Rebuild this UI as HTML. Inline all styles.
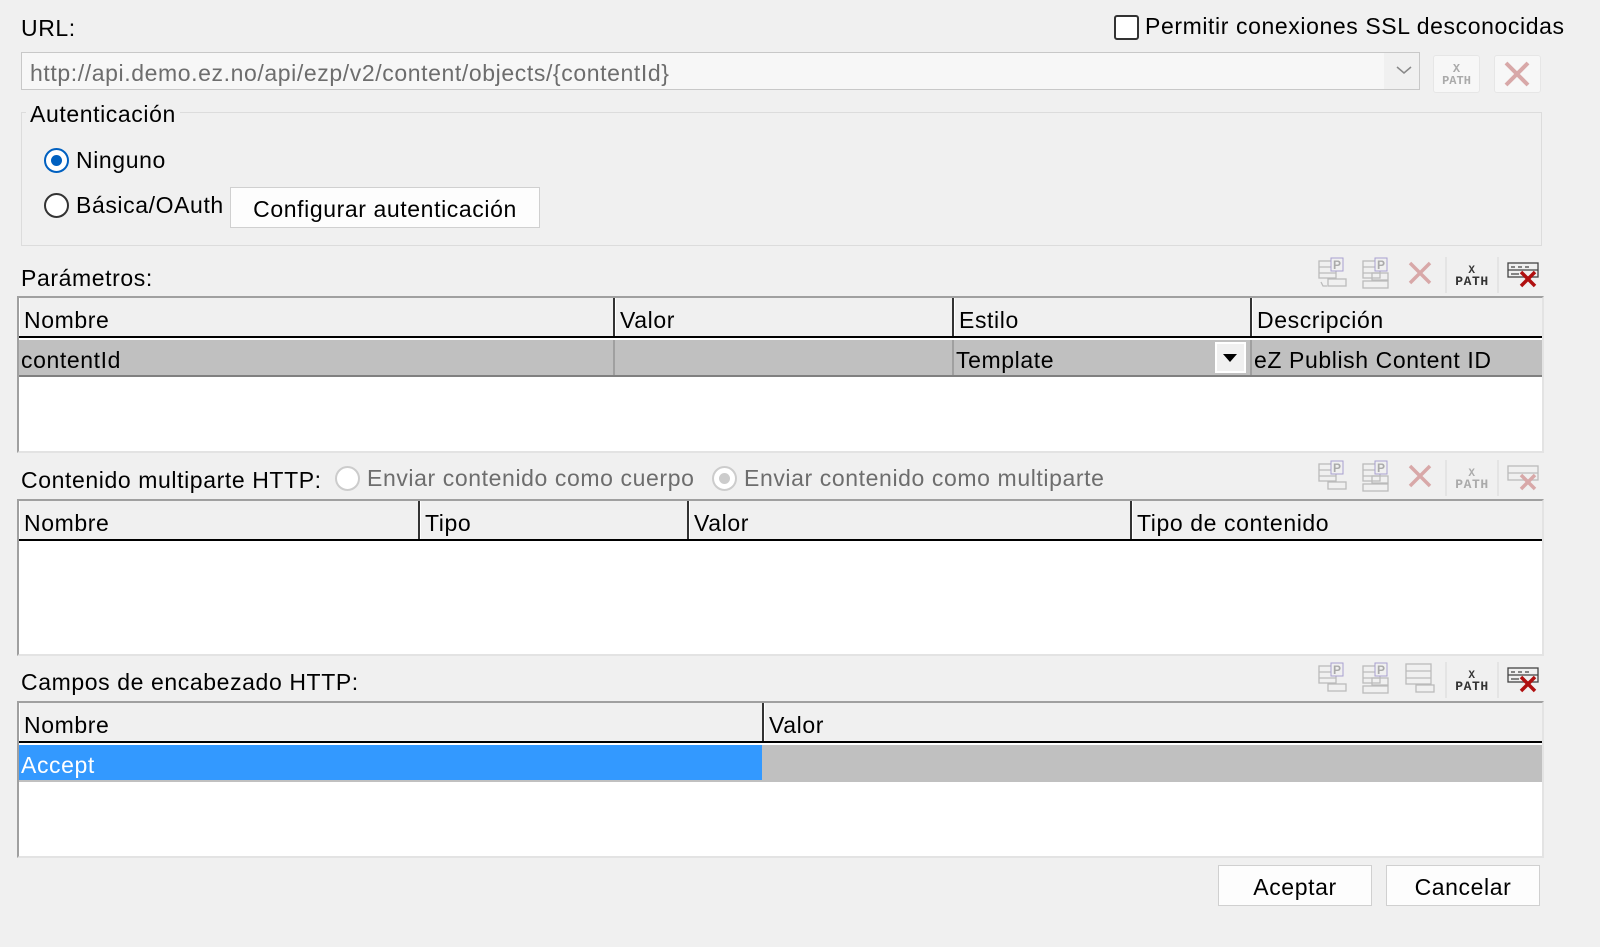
<!DOCTYPE html><html><head><meta charset="utf-8"><style>
*{box-sizing:border-box;margin:0;padding:0}
body{width:1600px;height:947px;background:#f0f0f0;font-family:"Liberation Sans",sans-serif;font-size:23px;letter-spacing:0.6px;color:#000;position:relative;overflow:hidden}
.a{position:absolute;white-space:nowrap}
.t{position:absolute;background:#fff;border:2px solid #a0a0a0;border-right-color:#e3e3e3;border-bottom-color:#e3e3e3}
.hd{position:absolute;left:0;right:0;top:0;height:40px;background:#f0f0f0;border-bottom:2px solid #000}
.hc{position:absolute;top:0;height:38px;border-right:2px solid #333;padding:9px 4px;border-left:1px solid #fff}
.row{position:absolute;left:0;right:0;height:37px;background:#c0c0c0;border-bottom:2px solid #808080}
.rc{position:absolute;top:0;height:35px;padding:7px 2px;border-right:2px solid #a0a0a0}
.btn{position:absolute;background:#fdfdfd;border:1px solid #d0d0d0;text-align:center;padding-top:8px}
.rad{position:absolute;width:25px;height:25px;border-radius:50%;border:2px solid #333;background:#fff}
</style></head><body>
<div class="a" style="left:21px;top:15px">URL:</div>
<div class="a" style="left:1114px;top:15px;width:25px;height:25px;border:2px solid #333;border-radius:3px;background:#fff"></div>
<div class="a" style="left:1145px;top:13px">Permitir conexiones SSL desconocidas</div>
<div class="a" style="left:21px;top:52px;width:1399px;height:38px;border:1px solid #c8c8c8;background:#f0f0f0"></div>
<div class="a" style="left:22px;top:53px;width:1362px;height:36px;background:#f7f7f7"></div>
<div class="a" style="left:30px;top:60px;color:#6d6d6d">http://api.demo.ez.no/api/ezp/v2/content/objects/{contentId}</div>
<svg class="a" style="left:1396px;top:65px" width="16" height="10"><path d="M1 2l7 6 7-6" fill="none" stroke="#888" stroke-width="1.5"/></svg>
<div class="a" style="left:1433px;top:55px;width:47px;height:38px;border:1px solid #e6e6e6;background:#f7f7f7;border-radius:3px;font:bold 12px 'Liberation Mono',monospace;letter-spacing:0;color:#aaa;text-align:center;line-height:12px;padding-top:7px">X<br>PATH</div>
<div class="a" style="left:1494px;top:55px;width:47px;height:38px;border:1px solid #e6e6e6;background:#f7f7f7;border-radius:3px"></div>
<svg class="a" style="left:1503px;top:60px" width="28" height="28"><path d="M3 3l22 22M25 3L3 25" stroke="#d8a8a8" stroke-width="4"/></svg>

<div class="a" style="left:21px;top:112px;width:1521px;height:134px;border:1px solid #dcdcdc"></div>
<div class="a" style="left:26px;top:101px;background:#f0f0f0;padding:0 4px">Autenticación</div>
<div class="rad" style="left:44px;top:148px;border-color:#0060c0"></div><div class="a" style="left:51px;top:155px;width:11px;height:11px;border-radius:50%;background:#0060c0"></div>
<div class="a" style="left:76px;top:147px">Ninguno</div>
<div class="rad" style="left:44px;top:193px"></div>
<div class="a" style="left:76px;top:192px">Básica/OAuth</div>
<div class="btn" style="left:230px;top:187px;width:310px;height:41px">Configurar autenticación</div>

<div class="a" style="left:21px;top:265px">Parámetros:</div>
<svg class="a" style="left:1316px;top:255px" width="228" height="40">
<g fill="none" stroke="#bbb" stroke-width="1.3"><rect x="3" y="6" width="17" height="17"/><path d="M3 12h17M3 18h17"/><rect x="12" y="24" width="18" height="7"/><path d="M5 27l2 4h4"/></g>
<rect x="15" y="3" width="12" height="13" fill="#f0f0f0" stroke="#a8a0d0"/><text x="17" y="14" font-size="12" font-weight="bold" fill="#aaa" font-family="Liberation Sans">P</text>
<g fill="none" stroke="#bbb" stroke-width="1.3"><rect x="47" y="6" width="17" height="17"/><path d="M47 12h17M47 18h17"/><rect x="56" y="18" width="16" height="7"/><rect x="47" y="26" width="25" height="7"/></g>
<rect x="59" y="3" width="12" height="13" fill="#f0f0f0" stroke="#a8a0d0"/><text x="61" y="14" font-size="12" font-weight="bold" fill="#aaa" font-family="Liberation Sans">P</text>
<path d="M94 8l20 20M114 8L94 28" stroke="#d8a8a8" stroke-width="3.5"/>
<line x1="130" y1="2" x2="130" y2="38" stroke="#d8d8d8"/>
<text x="156" y="18" font-size="11" font-weight="bold" fill="#333" font-family="Liberation Mono" text-anchor="middle">X</text><text x="156" y="30" font-size="13" font-weight="bold" fill="#333" font-family="Liberation Mono" text-anchor="middle">PATH</text>
<line x1="182" y1="2" x2="182" y2="38" stroke="#d8d8d8"/>
<g fill="none" stroke="#444" stroke-width="1.3"><rect x="192" y="8" width="30" height="14"/><path d="M192 15h30M195 12h4M202 12h4M209 12h4M195 19h8"/></g><path d="M205 17l14 14M219 17l-14 14" stroke="#b01010" stroke-width="3.5"/>
</svg>
<div class="t" style="left:17px;top:296px;width:1527px;height:157px">
<div class="hd"><div class="hc" style="left:0;width:596px">Nombre</div><div class="hc" style="left:596px;width:339px">Valor</div><div class="hc" style="left:935px;width:298px">Estilo</div><div class="hc" style="left:1233px;width:291px;border-right:none">Descripción</div></div>
<div class="row" style="top:42px"><div class="rc" style="left:0;width:596px">contentId</div><div class="rc" style="left:596px;width:339px"></div><div class="rc" style="left:935px;width:298px">Template<div class="a" style="left:261px;top:2px;width:31px;height:31px;background:#f0f0f0;border:2px solid #fff"><svg width="27" height="27"><path d="M6 10h14l-7 8z"/></svg></div></div><div class="rc" style="left:1233px;width:291px;border:none">eZ Publish Content ID</div></div>
</div>

<div class="a" style="left:21px;top:467px">Contenido multiparte HTTP:</div>
<div class="rad" style="left:335px;top:466px;border-color:#ccc"></div>
<div class="a" style="left:367px;top:465px;color:#6d6d6d">Enviar contenido como cuerpo</div>
<div class="rad" style="left:712px;top:466px;border-color:#ccc"></div><div class="a" style="left:719px;top:473px;width:11px;height:11px;border-radius:50%;background:#ccc"></div>
<div class="a" style="left:744px;top:465px;color:#6d6d6d">Enviar contenido como multiparte</div>
<svg class="a" style="left:1316px;top:458px" width="228" height="40">
<g fill="none" stroke="#bbb" stroke-width="1.3"><rect x="3" y="6" width="17" height="17"/><path d="M3 12h17M3 18h17"/><rect x="12" y="24" width="18" height="7"/></g>
<rect x="15" y="3" width="12" height="13" fill="#f0f0f0" stroke="#a8a0d0"/><text x="17" y="14" font-size="12" font-weight="bold" fill="#aaa" font-family="Liberation Sans">P</text>
<g fill="none" stroke="#bbb" stroke-width="1.3"><rect x="47" y="6" width="17" height="17"/><path d="M47 12h17M47 18h17"/><rect x="56" y="18" width="16" height="7"/><rect x="47" y="26" width="25" height="7"/></g>
<rect x="59" y="3" width="12" height="13" fill="#f0f0f0" stroke="#a8a0d0"/><text x="61" y="14" font-size="12" font-weight="bold" fill="#aaa" font-family="Liberation Sans">P</text>
<path d="M94 8l20 20M114 8L94 28" stroke="#d8a8a8" stroke-width="3.5"/>
<line x1="130" y1="2" x2="130" y2="38" stroke="#d8d8d8"/>
<text x="156" y="18" font-size="11" font-weight="bold" fill="#aaa" font-family="Liberation Mono" text-anchor="middle">X</text><text x="156" y="30" font-size="13" font-weight="bold" fill="#aaa" font-family="Liberation Mono" text-anchor="middle">PATH</text>
<line x1="182" y1="2" x2="182" y2="38" stroke="#d8d8d8"/>
<g fill="none" stroke="#bbb" stroke-width="1.3"><rect x="192" y="8" width="30" height="14"/><path d="M192 15h30"/></g><path d="M205 17l14 14M219 17l-14 14" stroke="#d8a8a8" stroke-width="3.5"/>
</svg>
<div class="t" style="left:17px;top:499px;width:1527px;height:157px">
<div class="hd"><div class="hc" style="left:0;width:401px">Nombre</div><div class="hc" style="left:401px;width:269px">Tipo</div><div class="hc" style="left:670px;width:443px">Valor</div><div class="hc" style="left:1113px;width:411px;border-right:none">Tipo de contenido</div></div>
</div>

<div class="a" style="left:21px;top:669px">Campos de encabezado HTTP:</div>
<svg class="a" style="left:1316px;top:660px" width="228" height="40">
<g fill="none" stroke="#bbb" stroke-width="1.3"><rect x="3" y="6" width="17" height="17"/><path d="M3 12h17M3 18h17"/><rect x="12" y="24" width="18" height="7"/></g>
<rect x="15" y="3" width="12" height="13" fill="#f0f0f0" stroke="#a8a0d0"/><text x="17" y="14" font-size="12" font-weight="bold" fill="#aaa" font-family="Liberation Sans">P</text>
<g fill="none" stroke="#bbb" stroke-width="1.3"><rect x="47" y="6" width="17" height="17"/><path d="M47 12h17M47 18h17"/><rect x="56" y="18" width="16" height="7"/><rect x="47" y="26" width="25" height="7"/></g>
<rect x="59" y="3" width="12" height="13" fill="#f0f0f0" stroke="#a8a0d0"/><text x="61" y="14" font-size="12" font-weight="bold" fill="#aaa" font-family="Liberation Sans">P</text>
<g fill="none" stroke="#bbb" stroke-width="1.3"><rect x="90" y="4" width="25" height="20"/><path d="M90 11h25M90 18h25"/><rect x="100" y="25" width="18" height="7"/></g>
<line x1="130" y1="2" x2="130" y2="38" stroke="#d8d8d8"/>
<text x="156" y="18" font-size="11" font-weight="bold" fill="#333" font-family="Liberation Mono" text-anchor="middle">X</text><text x="156" y="30" font-size="13" font-weight="bold" fill="#333" font-family="Liberation Mono" text-anchor="middle">PATH</text>
<line x1="182" y1="2" x2="182" y2="38" stroke="#d8d8d8"/>
<g fill="none" stroke="#444" stroke-width="1.3"><rect x="192" y="8" width="30" height="14"/><path d="M192 15h30M195 12h4M202 12h4M209 12h4M195 19h8"/></g><path d="M205 17l14 14M219 17l-14 14" stroke="#b01010" stroke-width="3.5"/>
</svg>
<div class="t" style="left:17px;top:701px;width:1527px;height:157px">
<div class="hd"><div class="hc" style="left:0;width:745px">Nombre</div><div class="hc" style="left:745px;width:779px;border-right:none">Valor</div></div>
<div class="row" style="top:42px;border-bottom:none"><div class="rc" style="left:0;width:743px;background:#3399ff;color:#fff;border:none">Accept</div></div>
</div>

<div class="btn" style="left:1218px;top:865px;width:154px;height:41px">Aceptar</div>
<div class="btn" style="left:1386px;top:865px;width:154px;height:41px">Cancelar</div>
</body></html>
